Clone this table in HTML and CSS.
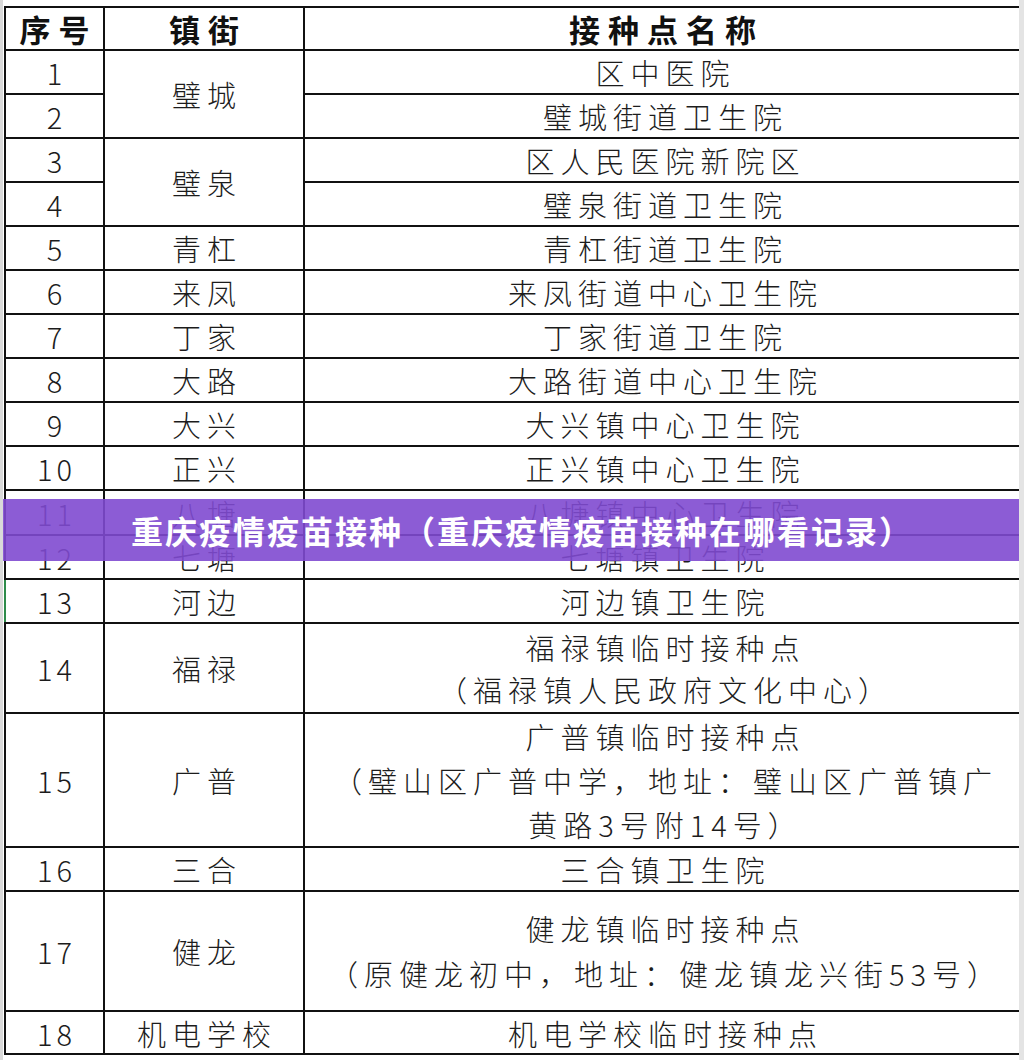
FILE: index.html
```html
<!DOCTYPE html>
<html lang="zh-CN">
<head>
<meta charset="utf-8">
<title>璧山区接种点</title>
<link rel="stylesheet" href="styles.css">
</head>
<body>
<div class="page">
  <div class="sheet">
    <table class="grid">
      <colgroup>
        <col class="c-no"><col class="c-town"><col class="c-site">
      </colgroup>
      <thead>
        <tr class="r-head"><th>序号</th><th>镇街</th><th>接种点名称</th></tr>
      </thead>
      <tbody>
        <tr class="r1"><td class="num">1</td><td rowspan="2">璧城</td><td>区中医院</td></tr>
        <tr class="r1"><td class="num">2</td><td>璧城街道卫生院</td></tr>
        <tr class="r1"><td class="num">3</td><td rowspan="2">璧泉</td><td>区人民医院新院区</td></tr>
        <tr class="r1"><td class="num">4</td><td>璧泉街道卫生院</td></tr>
        <tr class="r1"><td class="num">5</td><td>青杠</td><td>青杠街道卫生院</td></tr>
        <tr class="r1"><td class="num">6</td><td>来凤</td><td>来凤街道中心卫生院</td></tr>
        <tr class="r1"><td class="num">7</td><td>丁家</td><td>丁家街道卫生院</td></tr>
        <tr class="r1"><td class="num">8</td><td>大路</td><td>大路街道中心卫生院</td></tr>
        <tr class="r1"><td class="num">9</td><td>大兴</td><td>大兴镇中心卫生院</td></tr>
        <tr class="r1"><td class="num">10</td><td>正兴</td><td>正兴镇中心卫生院</td></tr>
        <tr class="r1b"><td class="num">11</td><td>八塘</td><td>八塘镇中心卫生院</td></tr>
        <tr class="r1"><td class="num">12</td><td>七塘</td><td>七塘镇卫生院</td></tr>
        <tr class="r1"><td class="num sel">13</td><td>河边</td><td>河边镇卫生院</td></tr>
        <tr class="r2"><td class="num">14</td><td>福禄</td><td class="multi m2">福禄镇临时接种点<br>（福禄镇人民政府文化中心）</td></tr>
        <tr class="r3"><td class="num">15</td><td>广普</td><td class="multi m3">广普镇临时接种点<br>（璧山区广普中学，地址：璧山区广普镇广<br>黄路3号附14号）</td></tr>
        <tr class="r1"><td class="num">16</td><td>三合</td><td>三合镇卫生院</td></tr>
        <tr class="r2b"><td class="num">17</td><td>健龙</td><td class="multi m2b">健龙镇临时接种点<br>（原健龙初中，地址：健龙镇龙兴街53号）</td></tr>
        <tr class="r-last"><td class="num">18</td><td>机电学校</td><td>机电学校临时接种点</td></tr>
      </tbody>
    </table>
  </div>
  <div class="banner">重庆疫情疫苗接种（重庆疫情疫苗接种在哪看记录）</div>
</div>
</body>
</html>
```

FILE: styles.css
```css
html, body {
  margin: 0;
  padding: 0;
  background: #ffffff;
}

.page {
  position: relative;
  width: 1024px;
  height: 1060px;
  overflow: hidden;
  background: #ffffff;
  border-left: 3px solid #d9d9d9;
  border-right: 5px solid #e4e4e4;
  box-sizing: border-box;
}

.sheet {
  padding-top: 6px;
  padding-left: 1px;
}

.grid {
  border-collapse: collapse;
  table-layout: fixed;
  width: 1016px;
  font-family: "Noto Sans CJK SC", "Noto Sans", sans-serif;
  color: #1c1c1c;
}

.c-no { width: 99px; }
.c-town { width: 200px; }
.c-site { width: 717px; }

.grid th,
.grid td {
  border: 2px solid #111111;
  padding: 0 0 0 6px;
  text-align: center;
  vertical-align: middle;
  font-size: 29px;
  font-weight: 300;
  letter-spacing: 6px;
  line-height: 34px;
  white-space: nowrap;
}

.grid th {
  font-size: 31px;
  font-weight: 700;
  letter-spacing: 8px;
  padding-left: 8px;
  color: #111111;
}

.grid td.num {
  letter-spacing: 4px;
  padding-left: 4px;
}

.grid td.sel {
  border-left-color: #2e8b4a;
}

.grid td.m2 { line-height: 42px; }
.grid td.m3 { line-height: 44px; }
.grid td.m2b { line-height: 45px; }

.r-head { height: 43px; }
.r1 { height: 44px; }
.r1b { height: 45px; }
.r2 { height: 90px; }
.r3 { height: 134px; }
.r2b { height: 120px; }
.r-last { height: 43px; }

.banner {
  position: absolute;
  left: -3px;
  right: -5px;
  top: 499px;
  height: 62px;
  padding-left: 20px;
  background: rgba(128, 74, 208, 0.9);
  color: #ffffff;
  font-family: "Noto Sans CJK SC", "Noto Sans", sans-serif;
  font-weight: 700;
  font-size: 32px;
  letter-spacing: 2px;
  line-height: 62px;
  text-align: center;
  white-space: nowrap;
}
```
